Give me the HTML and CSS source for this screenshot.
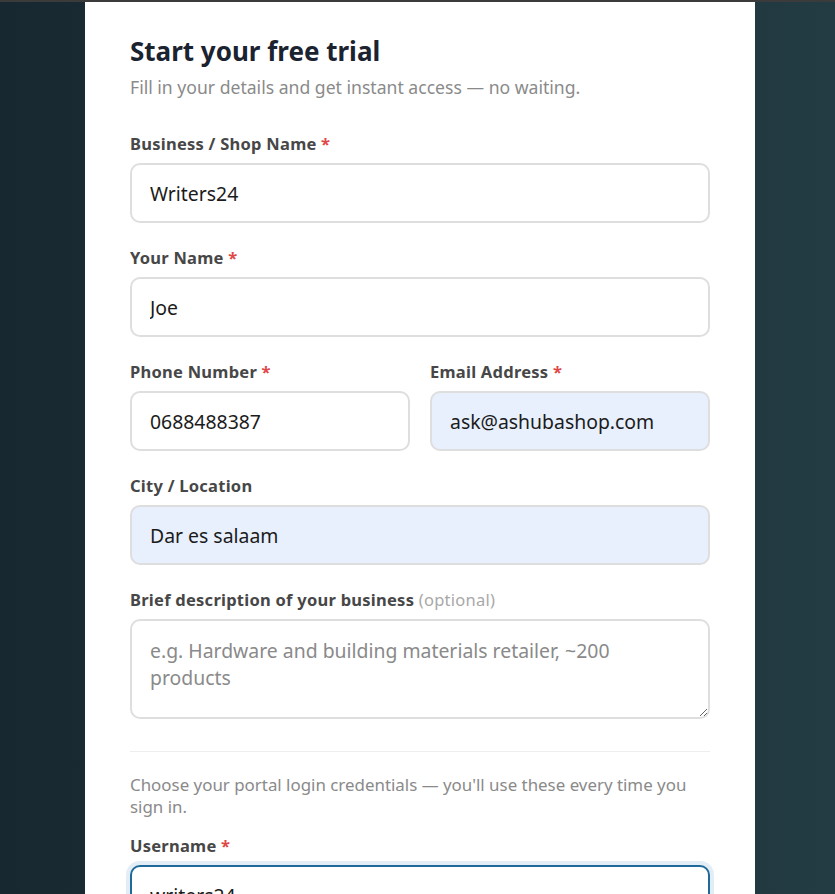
FILE: index.html
```html
<!DOCTYPE html>
<html lang="en">
<head>
<meta charset="utf-8">
<title>Start your free trial</title>
<link rel="stylesheet" href="styles.css">
</head>
<body>
<div class="topbar"></div>
<div class="page">
  <form class="card">
    <h1 class="title">Start your free trial</h1>
    <p class="subtitle">Fill in your details and get instant access — no waiting.</p>

    <div class="fields">
      <div class="field">
        <label class="label">Business / Shop Name <span class="req">*</span></label>
        <input class="input" type="text" value="Writers24">
      </div>

      <div class="field">
        <label class="label">Your Name <span class="req">*</span></label>
        <input class="input" type="text" value="Joe">
      </div>

      <div class="row">
        <div class="field">
          <label class="label">Phone Number <span class="req">*</span></label>
          <input class="input" type="text" value="0688488387">
        </div>
        <div class="field">
          <label class="label">Email Address <span class="req">*</span></label>
          <input class="input autofilled" type="text" value="ask@ashubashop.com">
        </div>
      </div>

      <div class="field">
        <label class="label">City / Location</label>
        <input class="input autofilled" type="text" value="Dar es salaam">
      </div>

      <div class="field">
        <label class="label">Brief description of your business <span class="opt">(optional)</span></label>
        <textarea class="input textarea" placeholder="e.g. Hardware and building materials retailer, ~200 products"></textarea>
      </div>
    </div>

    <hr class="divider">

    <p class="note">Choose your portal login credentials — you'll use these every time you sign in.</p>

    <div class="field">
      <label class="label">Username <span class="req">*</span></label>
      <input class="input focused" type="text" value="writers24">
    </div>
  </form>
</div>
</body>
</html>
```

FILE: styles.css
```css
* { box-sizing: border-box; }

html, body {
  margin: 0;
  height: 100%;
}

body {
  font-family: "Noto Sans", "Open Sans", sans-serif;
  background: linear-gradient(90deg, #172830 0%, #1c3038 50%, #233b43 100%);
  overflow: hidden;
}

.topbar {
  height: 2px;
  background: #3b3b3b;
}

.page {
  padding-left: 5px;
}

.card {
  width: 670px;
  margin: 0 auto;
  background: #ffffff;
  padding: 32px 45px 40px;
  min-height: 1000px;
}

.title {
  margin: 0 0 7px;
  font-size: 26px;
  line-height: 34px;
  font-weight: 700;
  color: #1b2230;
}

.subtitle {
  margin: 0 0 34px;
  font-size: 17.6px;
  line-height: 24px;
  color: #8a8a8a;
}

.fields {
  display: flex;
  flex-direction: column;
  gap: 24px;
}

.row {
  display: grid;
  grid-template-columns: 1fr 1fr;
  gap: 20px;
}

.field {
  display: flex;
  flex-direction: column;
  gap: 8px;
}

.label {
  font-size: 16.5px;
  line-height: 22px;
  font-weight: 700;
  letter-spacing: 0.25px;
  color: #474747;
}

.req {
  color: #e04646;
}

.opt {
  font-weight: 400;
  color: #a8a8a8;
}

.input {
  display: block;
  width: 100%;
  height: 60px;
  padding: 0 18px;
  border: 2px solid #dedede;
  border-radius: 10px;
  background: #ffffff;
  font-family: inherit;
  font-size: 19.4px;
  color: #1b1b1b;
  outline: none;
}

.autofilled {
  background: #e8f0fe;
}

.textarea {
  height: 100px;
  padding: 16px 18px;
  line-height: 27px;
  resize: vertical;
}

.textarea::placeholder {
  color: #8a8a8a;
}

.focused {
  border-color: #1f6a9b;
  box-shadow: 0 0 0 4px #e3edf5;
}

.divider {
  margin: 32px 0 22px;
  border: 0;
  border-top: 1px solid #eeeeee;
}

.note {
  margin: 0 0 17px;
  font-size: 16.9px;
  line-height: 22px;
  color: #8a8a8a;
}
```
